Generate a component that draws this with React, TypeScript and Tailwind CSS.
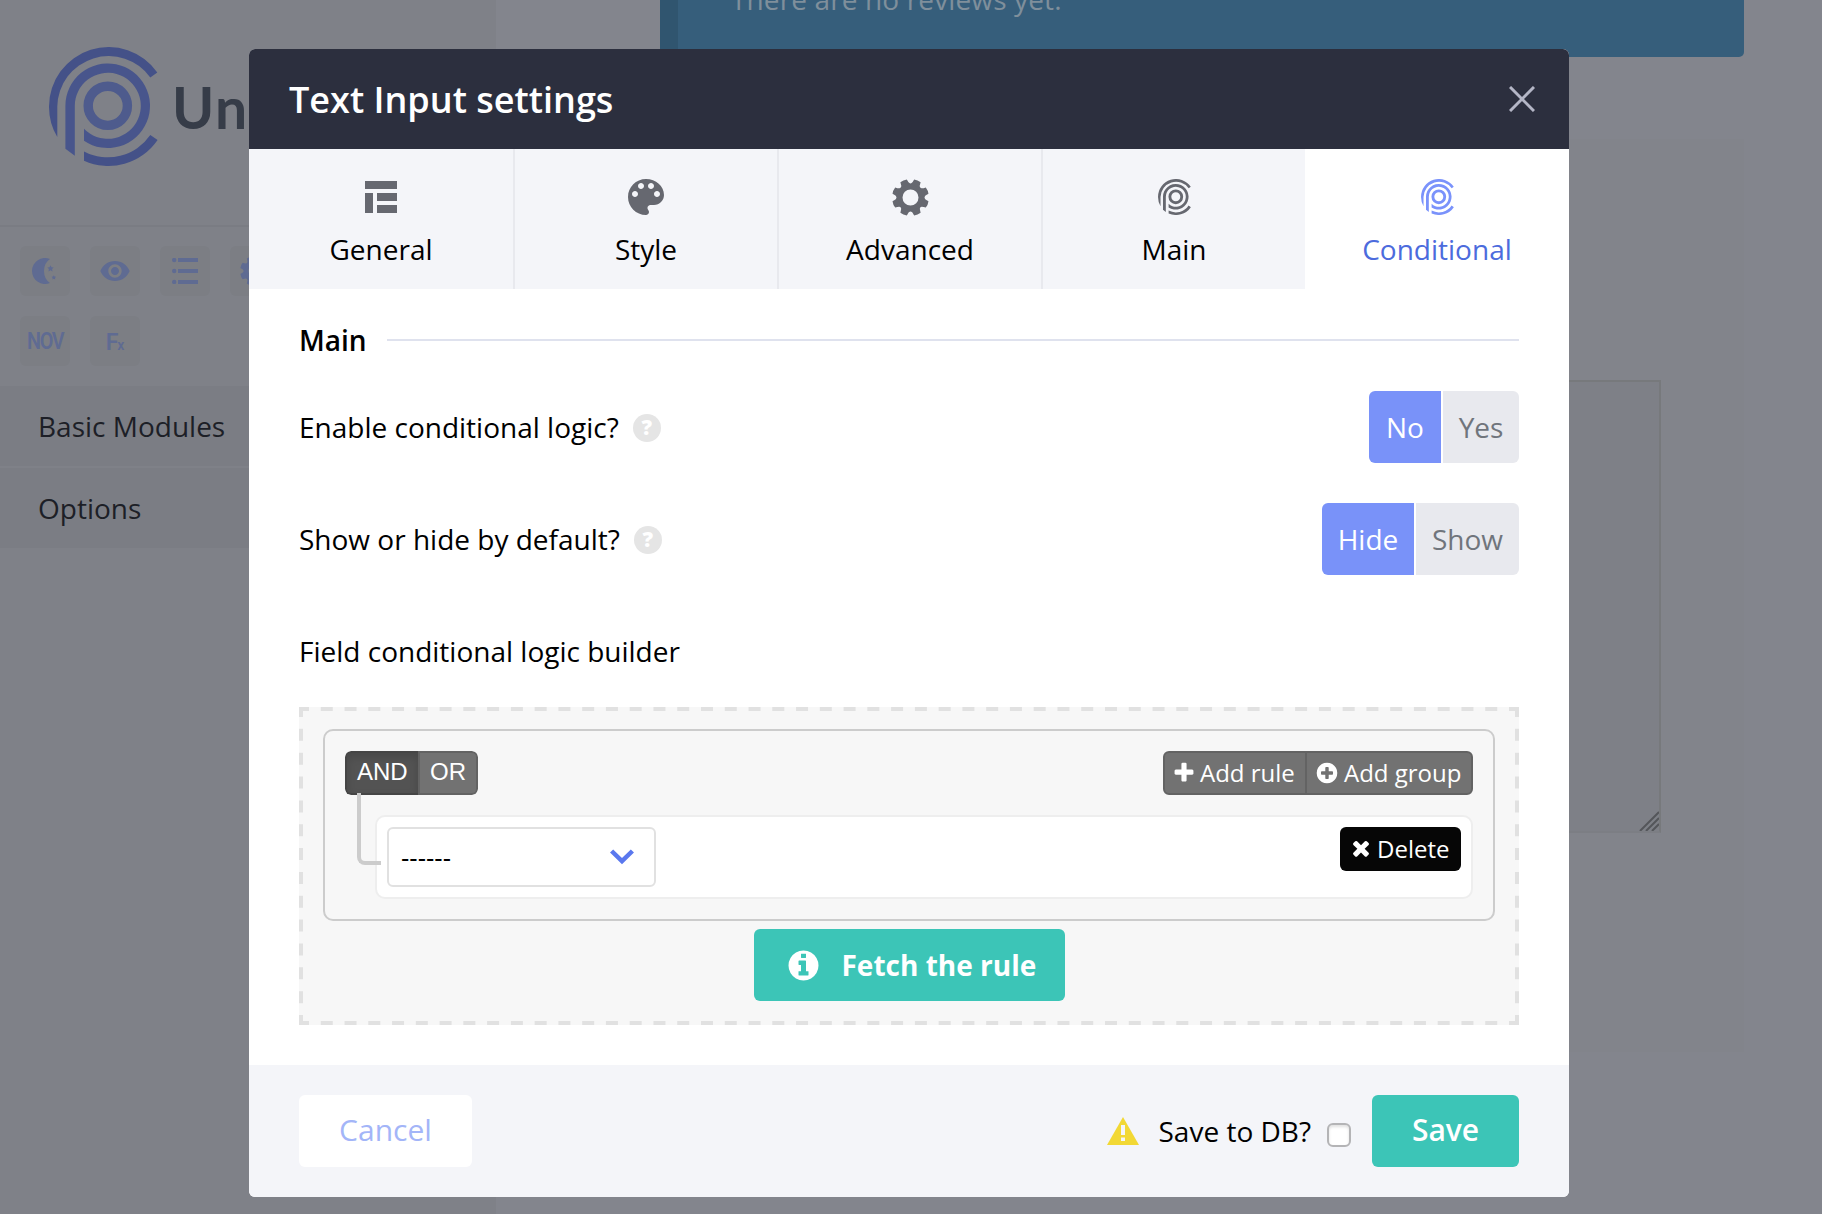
import React from "react";
import { MdRemoveRedEye } from "react-icons/md";

function BrandMark({ className, shades = ["currentColor", "currentColor", "currentColor"] }: { className: string; shades?: string[] }) {
  return (
    <svg viewBox="0 0 109 119" className={className}>
      <path fill={shades[0]} d="M108.3 25.5A59.5 59.5 0 0 0 0 59.5A59.5 59.5 0 0 0 8.3 90V59.5A51.3 51.3 0 0 1 101.3 30.5Z" />
      <path fill={shades[0]} d="M35 104.4A51.3 51.3 0 0 0 101.3 88L108.6 93A59.5 59.5 0 0 1 35 113.7Z" />
      <path fill={shades[1]} d="M16.4 101.7V58.8A42.3 42.3 0 1 1 35 93.8V81.7A33 33 0 1 0 25.8 58.8V108.7Z" />
      <circle cx="58.8" cy="58.8" r="19.6" fill="none" stroke={shades[2]} strokeWidth="9.4" />
    </svg>
  );
}

function Glyph({ d, className }: { d: string; className: string }) {
  return (
    <svg viewBox="0 0 1792 1792" className={className} fill="currentColor">
      <path d={d} />
    </svg>
  );
}

const PLUS =
  "M1600 736v192q0 40-28 68t-68 28h-416v416q0 40-28 68t-68 28h-192q-40 0-68-28t-28-68v-416h-416q-40 0-68-28t-28-68v-192q0-40 28-68t68-28h416v-416q0-40 28-68t68-28h192q40 0 68 28t28 68v416h416q40 0 68 28t28 68z";
const PLUS_CIRCLE =
  "M1344 960v-128q0-26-19-45t-45-19h-256v-256q0-26-19-45t-45-19h-128q-26 0-45 19t-19 45v256h-256q-26 0-45 19t-19 45v128q0 26 19 45t45 19h256v256q0 26 19 45t45 19h128q26 0 45-19t19-45v-256h256q26 0 45-19t19-45zm320-64q0 209-103 385.5t-279.5 279.5-385.5 103-385.5-103-279.5-279.5-103-385.5 103-385.5 279.5-279.5 385.5-103 385.5 103 279.5 279.5 103 385.5z";
const TIMES =
  "M1490 1322q0 40-28 68l-136 136q-28 28-68 28t-68-28l-294-294-294 294q-28 28-68 28t-68-28l-136-136q-28-28-28-68t28-68l294-294-294-294q-28-28-28-68t28-68l136-136q28-28 68-28t68 28l294 294 294-294q28-28 68-28t68 28l136 136q28 28 28 68t-28 68l-294 294 294 294q28 28 28 68z";
const INFO =
  "M1152 1376v-160q0-14-9-23t-23-9h-96v-512q0-14-9-23t-23-9h-320q-14 0-23 9t-9 23v160q0 14 9 23t23 9h96v320h-96q-14 0-23 9t-9 23v160q0 14 9 23t23 9h448q14 0 23-9t9-23zm-128-896v-160q0-14-9-23t-23-9h-192q-14 0-23 9t-9 23v160q0 14 9 23t23 9h192q14 0 23-9t9-23zm640 416q0 209-103 385.5t-279.5 279.5-385.5 103-385.5-103-279.5-279.5-103-385.5 103-385.5 279.5-279.5 385.5-103 385.5 103 279.5 279.5 103 385.5z";

function Gear({ className }: { className: string }) {
  return (
    <svg viewBox="-18.500 -18.500 37 37" className={className} fill="none" stroke="currentColor">
      <circle r="11" strokeWidth="6" />
      {[22.5, 67.5, 112.5, 157.5, 202.5, 247.5, 292.5, 337.5].map((a) => (
        <path key={a} transform={`rotate(${a})`} fill="currentColor" stroke="none" d="M-5.200 -12.500Q-3.600 -14 -3.500 -18Q0 -19 3.500 -18Q3.600 -14 5.200 -12.500Z" />
      ))}
    </svg>
  );
}

function LayoutIcon() {
  return (
    <svg viewBox="0 0 32 32" className="size-8" fill="currentColor">
      <path d="M0 0h32v8H0zM0 12h8v20H0zM12 12h20v8H12zM12 24h20v8H12z" />
    </svg>
  );
}

function PaletteIcon() {
  return (
    <svg viewBox="0 0 24 24" className="size-12" fill="currentColor">
      <path d="M12 3c-4.970 0-9 4.030-9 9s4.030 9 9 9c.83 0 1.500-.67 1.500-1.500 0-.39-.15-.74-.39-1.010-.23-.26-.38-.61-.38-.99 0-.83.67-1.500 1.500-1.500H16c2.760 0 5-2.240 5-5 0-4.420-4.030-8-9-8zm-5.500 9c-.83 0-1.500-.67-1.500-1.500S5.670 9 6.500 9 8 9.670 8 10.500 7.330 12 6.500 12zm3-4C8.670 8 8 7.330 8 6.500S8.670 5 9.500 5s1.500.67 1.500 1.500S10.330 8 9.500 8zm5 0c-.83 0-1.500-.67-1.500-1.500S13.670 5 14.500 5s1.500.67 1.500 1.500S15.330 8 14.500 8zm3 4c-.83 0-1.500-.67-1.500-1.500S16.670 9 17.500 9s1.500.67 1.500 1.500-.67 1.500-1.500 1.500z" />
    </svg>
  );
}

function Tool({ children }: { children: React.ReactNode }) {
  return <div className="flex size-[50px] shrink-0 items-center justify-center rounded-[6px] bg-[#7c7e84] text-[#5f6b92]">{children}</div>;
}

function Sidebar() {
  return (
    <aside className="flex h-full w-[496px] shrink-0 flex-col bg-[#7f8188]">
      <div className="flex h-[227px] border-b-2 border-[#7a7c83] pt-[47px] pl-[49px]">
        <BrandMark className="h-[119px] w-[109px]" shades={["#445188", "#48558c", "#4e5b8d"]} />
        <span className="mt-[22px] ml-[14px] font-['Lato'] text-[57px] leading-[76px] font-bold tracking-[1.500px] text-[#363c48]">Uni</span>
      </div>
      <div className="flex w-[340px] flex-wrap gap-5 px-5 pt-[19px]">
        <Tool>
          <svg viewBox="0 0 26 26" className="size-[26px]" fill="currentColor">
            <path d="M18 1Q12 5 12 13T18 25A13 13 0 1 1 18 1Z" />
            <path d="M18.500 7.200l1 2.100 2.200.3-1.600 1.500.4 2.300-2-1.200-2 1.200.4-2.300-1.600-1.500 2.200-.3zM21.800 17.300l.7 1.200 1.500.3-1 1.100.2 1.500-1.400-.6-1.400.6.2-1.500-1-1.100 1.500-.3z" />
          </svg>
        </Tool>
        <Tool>
          <MdRemoveRedEye className="size-8" />
        </Tool>
        <Tool>
          <svg viewBox="0 0 26 26" className="size-[26px]" fill="currentColor">
            <path d="M6 0h20v4H6zM6 11h20v4H6zM6 22h20v4H6z" />
            <circle cx="2.200" cy="2" r="2.200" />
            <circle cx="2.200" cy="13" r="2.200" />
            <circle cx="2.200" cy="24" r="2.200" />
          </svg>
        </Tool>
        <Tool>
          <Gear className="size-[30px]" />
        </Tool>
        <Tool>
          <span className="pt-[2px] font-['Roboto'] text-[23px] font-semibold tracking-[-1.500px]">
            <span className="inline-block scale-x-[0.86]">NOV</span>
          </span>
        </Tool>
        <Tool>
          <span className="flex items-baseline pt-[2px] font-['Roboto'] text-[23px] leading-none font-semibold">
            F<span className="-ml-px text-[14px]">x</span>
          </span>
        </Tool>
      </div>
      <div className="mt-5 flex flex-col gap-[2px] text-[28px] text-[#1d1f27]">
        <div className="flex h-20 items-center bg-[#7b7d84] pl-[38px]">Basic Modules</div>
        <div className="flex h-20 items-center bg-[#7b7d84] pl-[38px]">Options</div>
      </div>
    </aside>
  );
}

function PageContent() {
  return (
    <main className="flex-1 pr-[78px] pl-[164px]">
      <div className="flex h-[57px] items-start overflow-hidden rounded-b-[5px] border-l-[18px] border-[#30556f] bg-[#365e7b] pl-[53px] text-[28px] text-[#7f8f9b]">
        <span className="-mt-[20px] leading-[38px] tracking-[0.130px]">There are no reviews yet.</span>
      </div>
      <div className="mt-[82px] h-[913px] bg-[#82848b] pt-[241px] pr-[83px]">
        <div className="flex h-[453px] items-end justify-end border-2 border-[#77797c] border-b-[#7c7e84] bg-[#7e8087]">
          <svg viewBox="0 0 20 20" className="size-5" stroke="#54565a" strokeWidth="2">
            <path d="M1 20L20 1M7 20L20 7M13 20L20 13" />
          </svg>
        </div>
      </div>
    </main>
  );
}

function Tab({ icon, label, active }: { icon: React.ReactNode; label: string; active?: boolean }) {
  return (
    <div
      className={
        active
          ? "flex w-[264px] flex-col items-center bg-white text-[#4c6bdd]"
          : "flex w-[264px] flex-col items-center border-l-2 border-[#e8e9ee] bg-[#f4f5f9] text-black first:border-l-0"
      }
    >
      <div className={active ? "mt-6 flex h-12 items-center text-[#7a92fb]" : "mt-6 flex h-12 items-center text-[#666870]"}>{icon}</div>
      <div className="mt-2 text-[28px] leading-[40px]">{label}</div>
    </div>
  );
}

function SettingRow({ label, children }: { label: string; children: React.ReactNode }) {
  return (
    <div className="flex h-[72px] items-center">
      <span className="text-[28px]">{label}</span>
      <span className="mt-px ml-[14px] flex size-7 items-center justify-center rounded-full bg-[#e5e5e5] text-[21px] leading-none font-extrabold text-white">?</span>
      <div className="ml-auto flex h-[72px] gap-[2px] overflow-hidden rounded-[6px] text-[28px]">{children}</div>
    </div>
  );
}

function DashedFrame() {
  return (
    <svg viewBox="0 0 1220 318" className="absolute inset-0 h-full w-full" fill="none" stroke="#e1e1e1" strokeWidth="4">
      <path d="M0 2H10M2 0V10M1210 2H1220M1218 0V10M0 316H10M2 308V318M1210 316H1220M1218 308V318" />
      <path d="M10 2H1210M10 316H1210" strokeDasharray="12 11.7647" strokeDashoffset="12" />
      <path d="M2 10V308M1218 10V308" strokeDasharray="12 11.8462" strokeDashoffset="12" />
    </svg>
  );
}

function RuleBuilder() {
  return (
    <div className="relative mt-5 flex h-[318px] flex-col items-center bg-[#f7f7f7] px-6 pt-[22px]">
      <DashedFrame />
      <div className="relative h-[192px] w-[1172px] rounded-[10px] border-2 border-[#ccc] px-5 pt-5">
        <div className="flex justify-between text-white">
          <div className="flex h-11 overflow-hidden rounded-[6px] font-['Liberation_Sans'] text-[24px] leading-[37px]">
            <div className="w-[73px] rounded-l-[6px] border-2 border-r-0 border-[#454545] bg-[#535353] pl-[10px] shadow-[inset_0_4px_8px_rgba(0,0,0,0.14)]">AND</div>
            <div className="w-[60px] rounded-r-[6px] border-2 border-[#636363] bg-[#727272] pl-[10px]">OR</div>
          </div>
          <div className="flex h-11 rounded-[6px] border-2 border-[#636363] bg-[#727272] text-[24px]">
            <div className="flex w-[142px] items-center border-r-2 border-[#636363] pb-px pl-[7px]">
              <Glyph d={PLUS} className="mr-[4px] size-6" />
              Add rule
            </div>
            <div className="flex w-[164px] items-center pb-px pl-[8px]">
              <Glyph d={PLUS_CIRCLE} className="mr-[5px] size-6" />
              Add group
            </div>
          </div>
        </div>
        <div className="relative mt-5 ml-[30px] flex h-[84px] items-start justify-between rounded-[10px] border-2 border-[#eee] bg-white py-[10px] pr-[10px] pl-[10px]">
          <div className="absolute -top-[24px] -left-[20px] h-[72px] w-6 rounded-bl-[8px] border-b-4 border-l-4 border-[#ccc]" />
          <div className="flex h-[60px] w-[269px] items-center justify-between rounded-[6px] border-2 border-[#e1e1e1] pr-[20px] pl-[12px]">
            <span className="pt-[4px] font-['Liberation_Sans'] text-[25px]">------</span>
            <svg viewBox="0 0 24 16" className="h-4 w-6" fill="none" stroke="#5a78ee" strokeWidth="4.500">
              <path d="M1.600 2L12 12.200L22.400 2" />
            </svg>
          </div>
          <div className="flex h-11 w-[121px] items-center rounded-[6px] bg-[#060606] pl-[9px] text-[24px] text-white">
            <Glyph d={TIMES} className="mr-[4px] mb-[2px] size-6" />
            Delete
          </div>
        </div>
      </div>
      <div className="relative mt-2 flex h-[72px] w-[311px] items-center rounded-[6px] bg-[#3cc5b7] pl-[32px] text-[28px] font-bold text-white">
        <Glyph d={INFO} className="mr-[21px] size-[35px]" />
        Fetch the rule
      </div>
    </div>
  );
}

function SettingsModal() {
  return (
    <div className="flex h-[1148px] w-[1320px] flex-col overflow-hidden rounded-[6px] bg-white">
      <header className="flex h-[100px] items-center justify-between bg-[#2c2f3e] pr-[34px] pl-10 text-white">
        <h1 className="pt-[2px] text-[36px] font-semibold">Text Input settings</h1>
        <svg viewBox="0 0 26 26" className="size-[26px]" stroke="#b4b6c6" strokeWidth="3">
          <path d="M1 1L25 25M25 1L1 25" />
        </svg>
      </header>
      <nav className="flex h-[140px]">
        <Tab icon={<LayoutIcon />} label="General" />
        <Tab icon={<PaletteIcon />} label="Style" />
        <Tab icon={<Gear className="size-[37px]" />} label="Advanced" />
        <Tab icon={<BrandMark className="h-9 w-[33px]" />} label="Main" />
        <Tab icon={<BrandMark className="h-9 w-[33px]" />} label="Conditional" active />
      </nav>
      <section className="flex h-[776px] flex-col px-[50px] pt-[30px]">
        <div className="flex h-[42px] items-center gap-5">
          <h2 className="text-[28px] leading-[42px] font-semibold">Main</h2>
          <div className="h-[2px] flex-1 bg-[#dfe2ee]" />
        </div>
        <div className="mt-[30px] flex flex-col gap-10">
          <SettingRow label="Enable conditional logic?">
            <div className="flex w-[72px] items-center justify-center bg-[#7992f9] text-white">No</div>
            <div className="flex w-[76px] items-center justify-center bg-[#e8e9ee] text-[#70757c]">Yes</div>
          </SettingRow>
          <SettingRow label="Show or hide by default?">
            <div className="flex w-[92px] items-center justify-center bg-[#7992f9] text-white">Hide</div>
            <div className="flex w-[103px] items-center justify-center bg-[#e8e9ee] text-[#70757c]">Show</div>
          </SettingRow>
          <div className="flex h-[72px] items-center text-[28px]">Field conditional logic builder</div>
        </div>
        <RuleBuilder />
      </section>
      <footer className="flex h-[132px] items-center bg-[#f4f5f9] px-[50px]">
        <button className="h-[72px] w-[173px] rounded-[6px] bg-white pb-[4px] text-[30px] text-[#a3b5f8]">Cancel</button>
        <svg viewBox="0 0 32 28" className="mr-[20px] ml-auto h-7 w-8">
          <path fill="#f2d835" d="M16 0L32 28H0Z" />
          <path fill="#f4f5f9" d="M14 8h4v10h-4zM14 20.500h4v3.500h-4z" />
        </svg>
        <span className="text-[28px]">Save to DB?</span>
        <span className="mt-[8px] mr-[21px] ml-4 size-6 rounded-[6px] border-2 border-[#b4b4b6] bg-white shadow-[inset_0_2px_3px_rgba(0,0,0,0.12)]" />
        <button className="h-[72px] w-[147px] rounded-[6px] bg-[#3cc5b7] pb-[4px] text-[30px] font-semibold text-white">Save</button>
      </footer>
    </div>
  );
}

export default function App() {
  return (
    <div className="relative h-[1214px] w-[1822px] overflow-hidden bg-[#83858d] font-['Open_Sans',sans-serif] text-black">
      <div className="flex h-full">
        <Sidebar />
        <PageContent />
      </div>
      <div className="absolute inset-0 flex items-start pt-[49px] pl-[249px]">
        <SettingsModal />
      </div>
    </div>
  );
}
